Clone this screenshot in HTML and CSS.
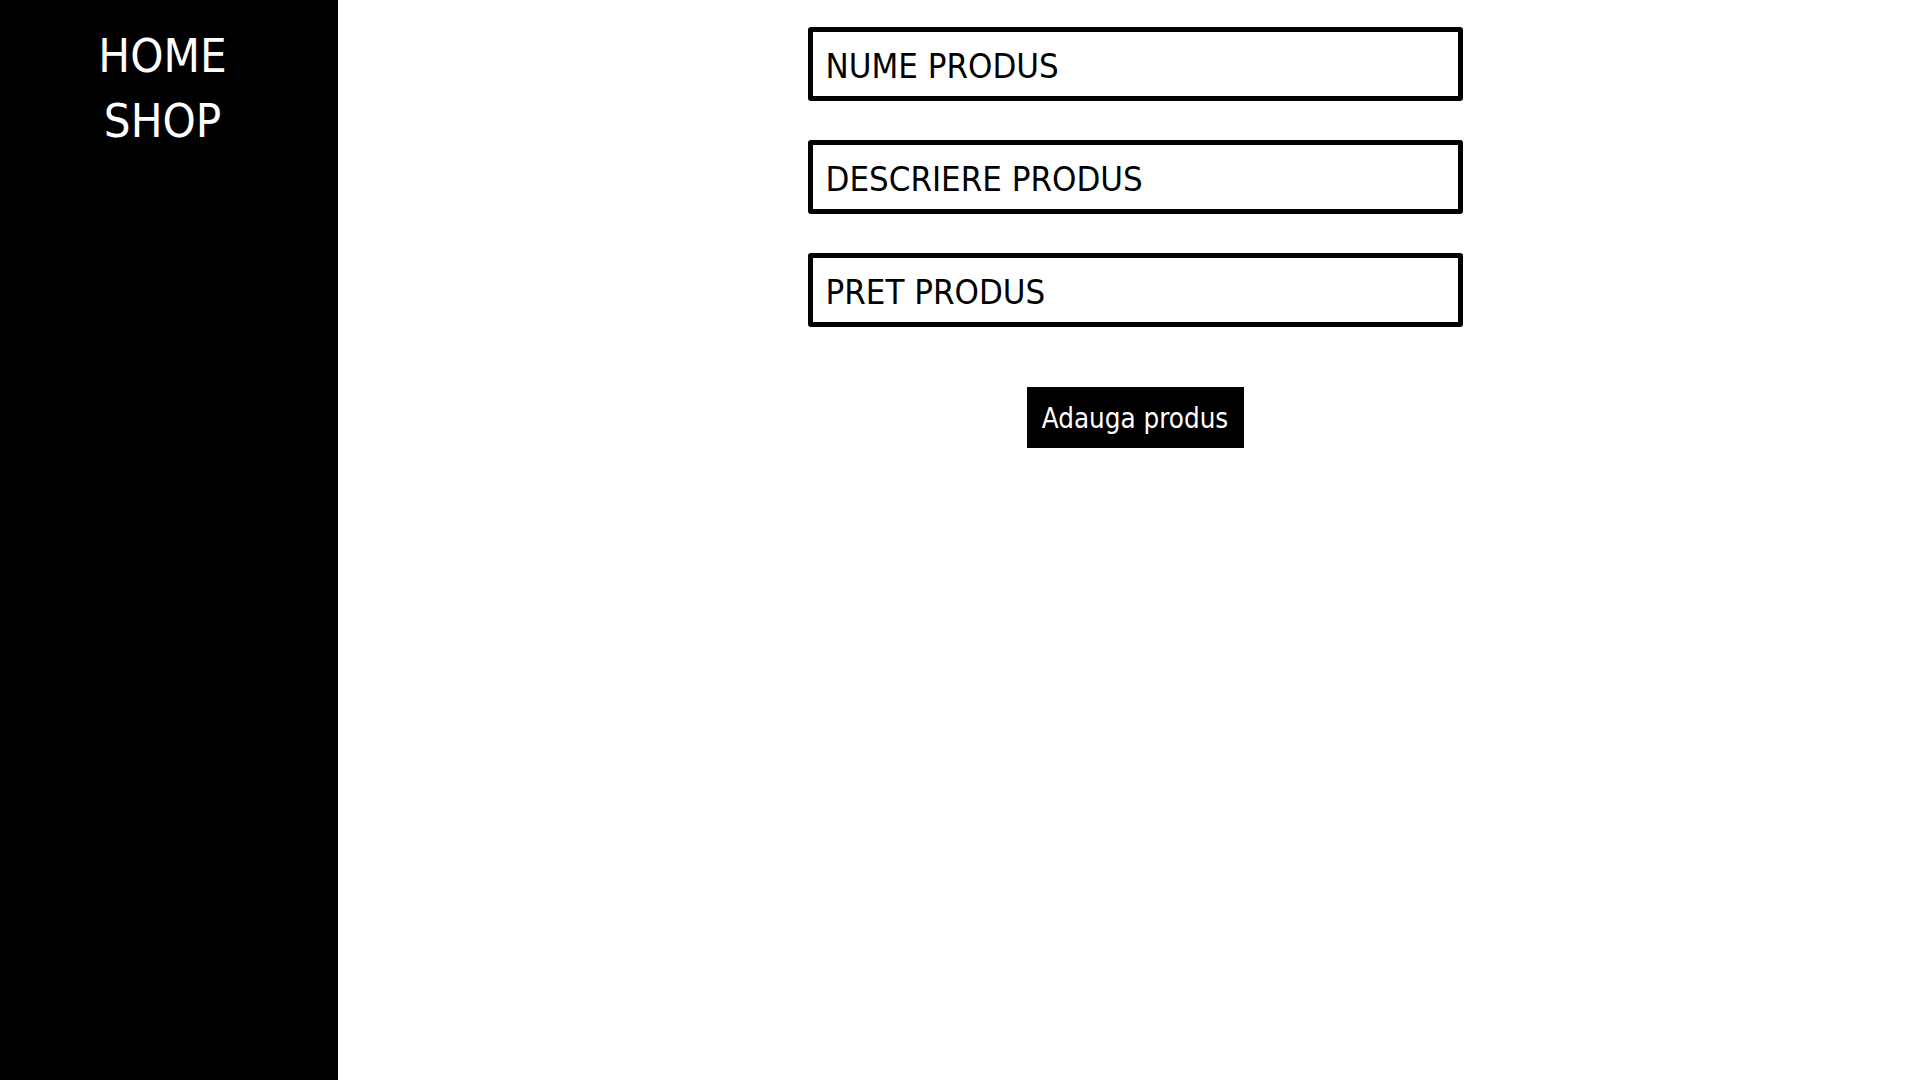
FILE: index.html
```html
<!DOCTYPE html>
<html lang="ro">
<head>
<meta charset="utf-8">
<title>Adauga produs</title>
<link rel="stylesheet" href="styles.css">
</head>
<body>
<div class="layout">
  <nav class="sidebar">
    <a class="nav-link" href="#">HOME</a>
    <a class="nav-link" href="#">SHOP</a>
  </nav>
  <main class="main">
    <form class="product-form">
      <input class="field" type="text" placeholder="NUME PRODUS">
      <input class="field" type="text" placeholder="DESCRIERE PRODUS">
      <input class="field" type="text" placeholder="PRET PRODUS">
      <button class="submit" type="button">Adauga produs</button>
    </form>
  </main>
</div>
</body>
</html>
```

FILE: styles.css
```css
html, body {
  margin: 0;
  padding: 0;
  height: 100%;
  background: #fff;
}

body {
  font-family: "DejaVu Sans Condensed", "DejaVu Sans", "Liberation Sans", sans-serif;
  font-stretch: condensed;
}

.layout {
  display: flex;
  height: 100vh;
}

.sidebar {
  width: 338px;
  flex: 0 0 338px;
  background: #000;
  display: flex;
  flex-direction: column;
  align-items: center;
  padding: 23px 13px 0 0;
  box-sizing: border-box;
}

.nav-link {
  color: #fff;
  text-decoration: none;
  font-size: 47px;
  line-height: 65px;
}

.main {
  flex: 1;
  padding: 27px 0 0 12px;
}

.product-form {
  display: flex;
  flex-direction: column;
  align-items: center;
}

.field {
  width: 655px;
  height: 74px;
  box-sizing: border-box;
  border: 5px solid #000;
  border-radius: 3px;
  padding: 4px 13px 0 13px;
  margin-bottom: 39px;
  font-family: inherit;
  font-stretch: condensed;
  font-size: 34.5px;
  color: #000;
  background: #fff;
  outline: none;
}

.field::placeholder {
  color: #000;
  opacity: 1;
}

.field:last-of-type {
  margin-bottom: 60px;
}

.submit {
  width: 217px;
  height: 61px;
  background: #000;
  color: #fff;
  border: none;
  border-radius: 0;
  font-family: inherit;
  font-stretch: condensed;
  font-size: 27.5px;
  padding: 0;
  cursor: pointer;
}
```
